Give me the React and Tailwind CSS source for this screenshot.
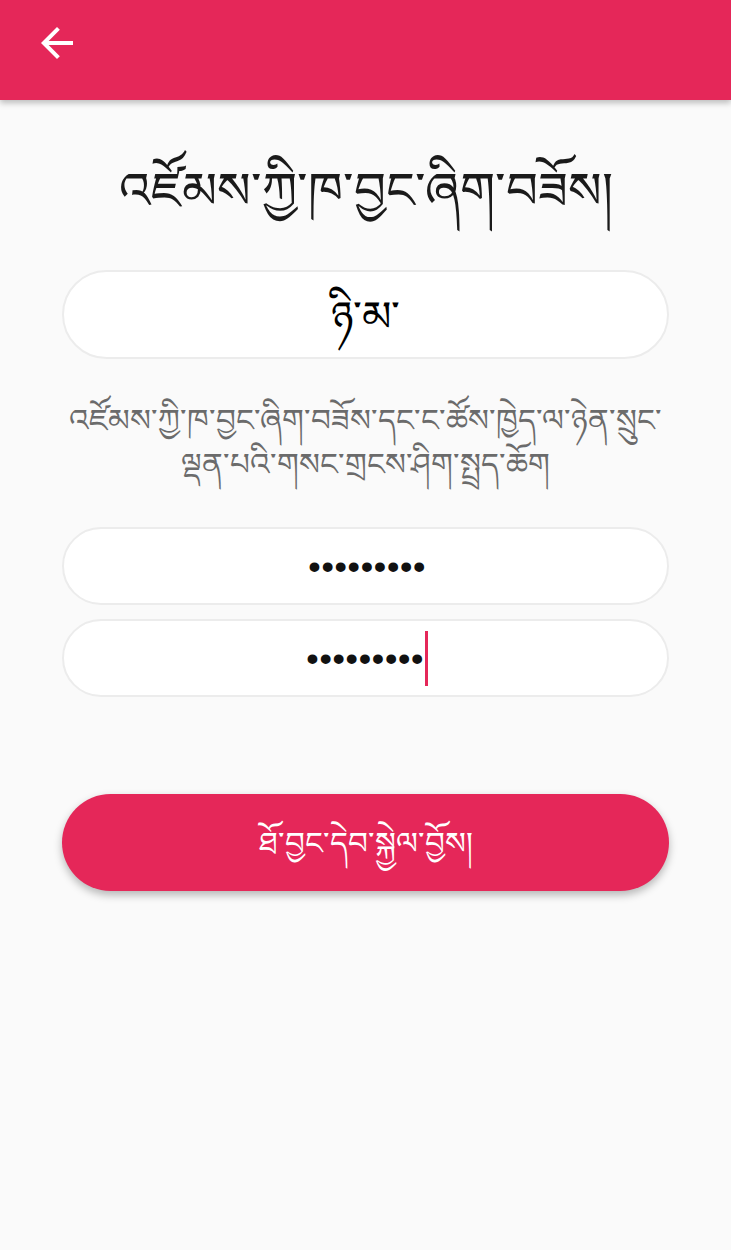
import React from 'react';

const PINK = 'bg-[#e52759]';

function BackArrow() {
    return (
        <svg width="48" height="48" viewBox="0 0 24 24" fill="#ffffff">
            <path d="M20 11H7.83l5.59-5.59L12 4l-8 8 8 8 1.41-1.41L7.83 13H20v-2z" />
        </svg>
    );
}

function PillField({ children, className = '' }) {
    return (
        <div className={`w-full bg-white rounded-full border-2 border-[#ececec] flex items-center justify-center ${className}`}>
            {children}
        </div>
    );
}

export default function App() {
    return (
        <div className="w-[731px] h-[1250px] bg-[#fafafa] font-['Noto_Sans','DejaVu_Sans',sans-serif] overflow-hidden">
            {/* App bar */}
            <header className={`${PINK} h-[100px] pl-[33px] pt-[19px] shadow-[0_3px_6px_rgba(0,0,0,0.25)] relative`}>
                <BackArrow />
            </header>

            <main className="px-[62px] flex flex-col items-center">
                <h1 className="mt-[47px] h-[85px] text-[50px] leading-[85px] text-[#1a1a1a] text-center whitespace-nowrap">
                    འཛོམས་ཀྱི་ཁ་བྱང་ཞིག་བཟོས།
                </h1>

                <PillField className="mt-[38px] h-[89px]">
                    <span className="text-[42px] text-black leading-none">ཉི་མ་</span>
                </PillField>

                <p className="mt-[38px] text-[31px] leading-[44px] text-[#6b6b6b] text-center whitespace-nowrap">
                    འཛོམས་ཀྱི་ཁ་བྱང་ཞིག་བཟོས་དང་ང་ཚོས་ཁྱེད་ལ་ཉེན་སྲུང་
                    <br />
                    ལྡན་པའི་གསང་གྲངས་ཤིག་སྤྲད་ཆོག
                </p>

                <PillField className="mt-[42px] h-[78px]">
                    <span className="text-[34px] font-bold text-[#111] tracking-[1.2px] font-['Liberation_Sans',sans-serif] ml-[4px]">•••••••••</span>
                </PillField>

                <PillField className="mt-[14px] h-[78px]">
                    <span className="text-[34px] font-bold text-[#111] tracking-[1.2px] font-['Liberation_Sans',sans-serif] flex items-center ml-[4px]">
                        •••••••••
                        <span className="inline-block w-[3px] h-[55px] bg-[#e52759] ml-[1px]" />
                    </span>
                </PillField>

                <button className={`${PINK} mt-[97px] w-full h-[97px] rounded-full text-white text-[31px] shadow-[0_4px_8px_rgba(0,0,0,0.28)]`}>
                    ཐོ་བྱང་དེབ་སྐྱེལ་བྱོས།
                </button>
            </main>
        </div>
    );
}
